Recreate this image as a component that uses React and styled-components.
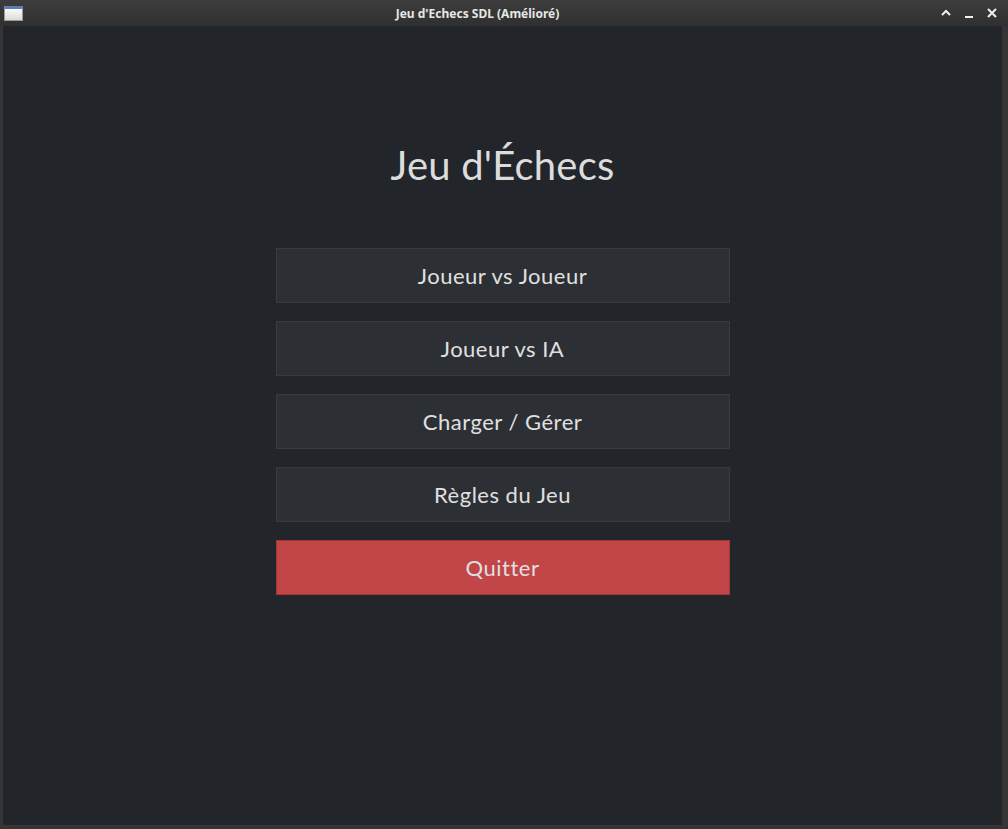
import React from 'react';
import styled, { createGlobalStyle } from 'styled-components';

const GlobalStyle = createGlobalStyle`
  html, body {
    margin: 0;
    padding: 0;
    background: #353535;
  }
`;

const Frame = styled.div`
  width: 1008px;
  height: 829px;
  display: flex;
  flex-direction: column;
  background: #353535;
  overflow: hidden;
`;

const TitleBar = styled.div`
  height: 26px;
  flex: none;
  display: flex;
  align-items: center;
  background: linear-gradient(to bottom, #3d3d3d, #303030);
  color: #e6e6e6;
  font-family: "Noto Sans", "DejaVu Sans", sans-serif;
  font-weight: bold;
  font-size: 12px;
`;

const AppIcon = styled.div`
  width: 19px;
  height: 15px;
  margin-left: 4px;
  box-sizing: border-box;
  border: 1px solid #9a9a9a;
  border-top: 3px solid #5b7fb5;
  background: linear-gradient(to bottom, #fafafa, #dcdcd6);
`;

const WindowTitle = styled.div`
  flex: 1;
  text-align: center;
  margin-left: 50px;
  margin-right: 58px;
`;

const Controls = styled.div`
  display: flex;
  align-items: center;
  gap: 11px;
  margin-right: 10px;

  svg {
    display: block;
  }
`;

const Content = styled.div`
  flex: 1;
  margin: 0 6px 4px 3px;
  background: #222529;
  display: flex;
  flex-direction: column;
  align-items: center;
`;

const Heading = styled.h1`
  margin: 111px 0 0;
  font-family: "Lato", "Liberation Sans", sans-serif;
  font-weight: 400;
  font-size: 40px;
  line-height: 56px;
  color: #dcdcdc;
  letter-spacing: 0.2px;
`;

const Menu = styled.div`
  margin-top: 55px;
  display: flex;
  flex-direction: column;
  gap: 18px;
  width: 454px;
`;

const MenuButton = styled.button`
  height: 55px;
  box-sizing: border-box;
  border: 1px solid ${(p) => (p.$danger ? '#a83337' : '#373a40')};
  background: ${(p) => (p.$danger ? '#c24548' : '#2c2f34')};
  color: #e0e0e0;
  font-family: "Lato", "Liberation Sans", sans-serif;
  font-size: 22px;
  letter-spacing: 0.5px;
  padding: 0;
  cursor: pointer;
`;

const items = ['Joueur vs Joueur', 'Joueur vs IA', 'Charger / Gérer', 'Règles du Jeu'];

export default function App() {
  return (
    <Frame>
      <GlobalStyle />
      <TitleBar>
        <AppIcon />
        <WindowTitle>Jeu d'Echecs SDL (Amélioré)</WindowTitle>
        <Controls>
          <svg width="12" height="12" viewBox="0 0 12 12">
            <path d="M2 8 L6 4 L10 8" stroke="#f0f0f0" strokeWidth="2" fill="none" />
          </svg>
          <svg width="12" height="12" viewBox="0 0 12 12">
            <path d="M2 10 H10" stroke="#f0f0f0" strokeWidth="2" fill="none" />
          </svg>
          <svg width="12" height="12" viewBox="0 0 12 12">
            <path d="M2 2 L10 10 M10 2 L2 10" stroke="#f0f0f0" strokeWidth="2" fill="none" />
          </svg>
        </Controls>
      </TitleBar>
      <Content>
        <Heading>Jeu d'Échecs</Heading>
        <Menu>
          {items.map((label) => (
            <MenuButton key={label}>{label}</MenuButton>
          ))}
          <MenuButton $danger>Quitter</MenuButton>
        </Menu>
      </Content>
    </Frame>
  );
}
